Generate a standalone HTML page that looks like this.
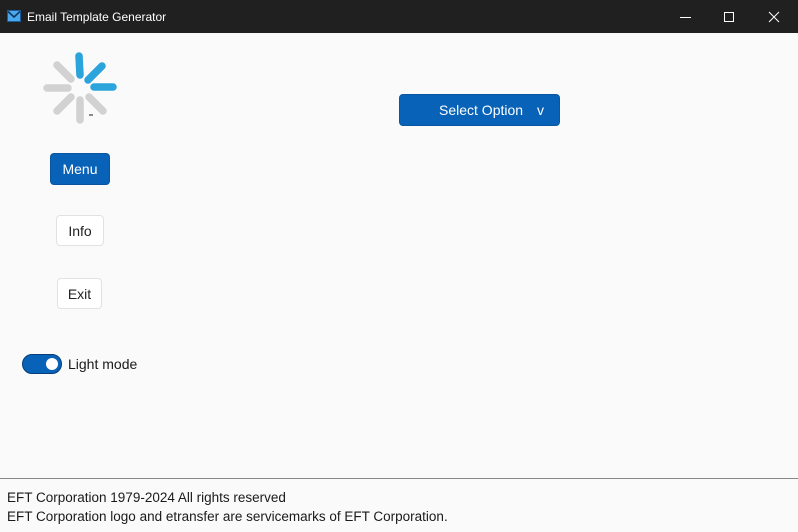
<!DOCTYPE html>
<html><head><style>
body{margin:0;width:798px;height:532px;background:#fafafa;font-family:"Segoe UI","Liberation Sans",sans-serif;position:relative;overflow:hidden}
.tb{position:absolute;left:0;top:0;width:798px;height:33px;background:#202020;color:#fff;font-size:12px}
.tb .t{position:absolute;left:27px;top:10px}
.btn{position:absolute;font-size:14px;box-sizing:border-box;text-align:center;border-radius:4px}
.blue{background:#0862b8;color:#fff;border:1px solid #0a55a0}
.wh{background:#fff;color:#222;border:1px solid #e2e2e2}
.ft{position:absolute;left:0;top:478px;width:798px;height:54px;border-top:1px solid #888;background:#fafafa;font-size:13.5px;color:#1a1a1a;line-height:19px;padding:9px 0 0 7px;box-sizing:border-box}
</style></head><body>
<div class="tb">
<svg style="position:absolute;left:7px;top:10px" width="14" height="12"><rect x="0.5" y="0.5" width="13" height="11" fill="#4aa8ee" stroke="#1c5d99"/><path d="M1 1.5 L7 7 L13 1.5" stroke="#10375e" stroke-width="1.6" fill="none"/></svg>
<span class="t">Email Template Generator</span>
<svg style="position:absolute;left:680px;top:10px" width="100" height="14" stroke="#fff" fill="none" stroke-width="1"><path d="M0 7.5H11"/><rect x="44.5" y="2.5" width="9" height="9"/><path d="M89 2L99 12M99 2L89 12"/></svg>
</div>
<svg style="position:absolute;left:40px;top:48px" width="80" height="80" stroke-linecap="round" stroke-width="7.5">
<g stroke="#d2d2d2">
<line x1="40" y1="52" x2="40" y2="72"/>
<line x1="31" y1="49" x2="17" y2="63"/>
<line x1="28" y1="40" x2="7" y2="40"/>
<line x1="31" y1="31" x2="17" y2="17"/>
<line x1="49" y1="49" x2="63" y2="63"/>
</g>
<g stroke="#2ba3db">
<line x1="39" y1="8" x2="40" y2="27"/>
<line x1="48" y1="32" x2="62" y2="18"/>
<line x1="54" y1="39" x2="73" y2="39"/>
</g>
<line x1="49" y1="67" x2="53" y2="67" stroke="#666" stroke-width="1.5" stroke-linecap="butt"/>
</svg>
<div class="btn blue" style="left:50px;top:153px;width:60px;height:32px;line-height:31px">Menu</div>
<div class="btn wh" style="left:56px;top:215px;width:48px;height:31px;line-height:31px">Info</div>
<div class="btn wh" style="left:57px;top:278px;width:45px;height:31px;line-height:31px">Exit</div>
<div style="position:absolute;left:22px;top:354px;width:40px;height:20px;border-radius:10px;background:#0862b8;box-sizing:border-box;border:1px solid #063e78"><div style="position:absolute;right:3px;top:3px;width:12px;height:12px;border-radius:50%;background:#fff"></div></div>
<div style="position:absolute;left:68px;top:356px;font-size:14px;color:#1a1a1a">Light mode</div>
<div class="btn blue" style="left:399px;top:94px;width:161px;height:32px;line-height:31px;text-align:left"><span style="position:absolute;left:39px">Select Option</span><span style="position:absolute;left:137px">v</span></div>
<div class="ft">EFT Corporation 1979-2024 All rights reserved<br>EFT Corporation logo and etransfer are servicemarks of EFT Corporation.</div>
</body></html>
